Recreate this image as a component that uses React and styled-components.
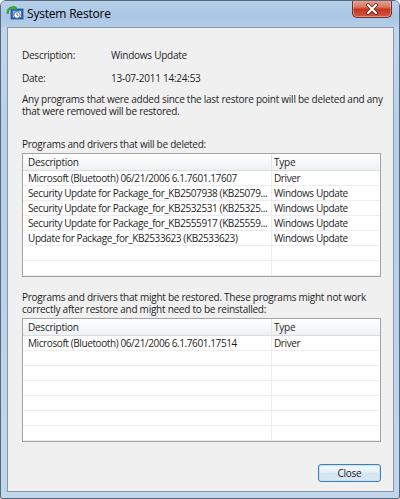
import styled, { createGlobalStyle } from 'styled-components'

const GlobalStyle = createGlobalStyle`
  html, body {
    margin: 0;
    padding: 0;
    background: #ffffff;
  }
  * {
    box-sizing: border-box;
  }
`

const Window = styled.div`
  width: 400px;
  height: 499px;
  display: flex;
  flex-direction: column;
  background: linear-gradient(to bottom, #c3d8ee 0%, #b7cfe9 30%, #c0d6ec 100%);
  border: 1px solid #55687c;
  border-radius: 6px 6px 2px 2px;
  font-family: "Open Sans", "Noto Sans", sans-serif;
  font-size: 10px;
  letter-spacing: -0.25px;
  color: #1e1e1e;
  overflow: hidden;
`

const TitleBar = styled.div`
  height: 26px;
  flex-shrink: 0;
  display: flex;
  align-items: flex-start;
  padding-left: 5px;
  background: linear-gradient(to bottom, #b9d1ea 0%, #a9c6e5 60%, #b6cfe9 100%);
`

const TitleIcon = styled.div`
  width: 18px;
  height: 16px;
  margin-top: 4px;
`

const TitleText = styled.div`
  margin-left: 3px;
  margin-top: 5px;
  font-size: 12px;
  letter-spacing: -0.2px;
  line-height: 16px;
  color: #000;
`

const CloseButton = styled.div`
  margin-left: auto;
  margin-right: 7px;
  width: 40px;
  height: 18px;
  margin-top: -1px;
  border: 1px solid #6b3027;
  border-top: none;
  border-radius: 0 0 5px 5px;
  background: linear-gradient(to bottom, #e9a593 0%, #d97a63 40%, #c4371f 55%, #d4573f 100%);
  box-shadow: inset 0 0 0 1px rgba(255, 255, 255, 0.35);
  display: flex;
  align-items: center;
  justify-content: center;
`

const Client = styled.div`
  flex: 1;
  margin: 0 5px 6px 6px;
  background: #f0f0f0;
  border: 1px solid #8a98a6;
  padding: 20px 13px 0 14px;
  display: flex;
  flex-direction: column;
`

const InfoRow = styled.div`
  display: flex;
  height: 14px;
  line-height: 14px;
  margin-bottom: ${(p) => p.$gap || 0}px;
`

const InfoLabel = styled.div`
  width: 89px;
`

const Paragraph = styled.p`
  margin: ${(p) => p.$top}px 0 0;
  line-height: 12px;
  white-space: nowrap;
`

const Table = styled.div`
  margin-top: 3px;
  width: 359px;
  height: 124px;
  flex-shrink: 0;
  background: #fff;
  border: 1px solid #a3a3a3;
  display: flex;
  flex-direction: column;
`

const HeaderRow = styled.div`
  display: grid;
  grid-template-columns: 249px 1fr;
  height: 17px;
  flex-shrink: 0;
  background: linear-gradient(to bottom, #ffffff 0%, #f7f8f9 50%, #eef0f2 100%);
  border-bottom: 1px solid #d9dde2;
`

const HeaderCell = styled.div`
  padding-left: ${(p) => (p.$first ? 5 : 2)}px;
  line-height: 16px;
  border-right: 1px solid ${(p) => (p.$first ? '#e2e5e9' : 'transparent')};
`

const Row = styled.div`
  display: grid;
  grid-template-columns: 249px 1fr;
  height: 15px;
  flex-shrink: 0;
  border-bottom: 1px solid #ededed;
`

const Cell = styled.div`
  padding-left: ${(p) => (p.$first ? 5 : 2)}px;
  line-height: 14px;
  letter-spacing: -0.4px;
  white-space: nowrap;
  overflow: hidden;
  border-right: 1px solid ${(p) => (p.$first ? '#ededed' : 'transparent')};
`

const Footer = styled.div`
  display: flex;
  justify-content: flex-end;
  width: 359px;
  margin-top: 22px;
`

const Button = styled.button`
  width: 63px;
  height: 18px;
  padding: 0;
  font-family: inherit;
  font-size: 10px;
  letter-spacing: inherit;
  color: #1e1e1e;
  border: 1px solid #3c7fb1;
  border-radius: 3px;
  background: linear-gradient(to bottom, #f4f9fd 0%, #e6f0f8 45%, #d4e4f0 50%, #dbe8f2 100%);
  box-shadow: inset 0 0 0 1px #c5e2f6;
`

const RestoreIcon = () => (
  <svg width="18" height="16" viewBox="0 0 18 16">
    <rect x="5" y="4" width="12" height="10" fill="#2f6fc7" stroke="#1b4d96" strokeWidth="0.8" />
    <rect x="7" y="6" width="8" height="6" fill="#ffffff" />
    <path d="M7 6 L15 6 L7 12 Z" fill="#7fb7ef" />
    <path d="M2 9 A5 5 0 0 1 9 3" fill="none" stroke="#3aa12c" strokeWidth="2.2" />
    <path d="M8 0.5 L11.5 3.2 L8 5.8 Z" fill="#3aa12c" />
    <circle cx="11" cy="10" r="3.2" fill="#ffffff" stroke="#505a66" strokeWidth="0.8" />
    <path d="M11 8.2 L11 10 L12.4 10.8" fill="none" stroke="#303030" strokeWidth="0.8" />
  </svg>
)

const CloseGlyph = () => (
  <svg width="14" height="12" viewBox="0 0 14 12">
    <path d="M3 2 L11 10 M11 2 L3 10" stroke="#5b2219" strokeWidth="3.6" strokeLinecap="square" />
    <path d="M3 2 L11 10 M11 2 L3 10" stroke="#ffffff" strokeWidth="2" strokeLinecap="square" />
  </svg>
)

const deleted = [
  ['Microsoft (Bluetooth) 06/21/2006 6.1.7601.17607', 'Driver'],
  ['Security Update for Package_for_KB2507938 (KB25079...', 'Windows Update'],
  ['Security Update for Package_for_KB2532531 (KB25325...', 'Windows Update'],
  ['Security Update for Package_for_KB2555917 (KB25559...', 'Windows Update'],
  ['Update for Package_for_KB2533623 (KB2533623)', 'Windows Update'],
]

const restored = [['Microsoft (Bluetooth) 06/21/2006 6.1.7601.17514', 'Driver']]

const ProgramTable = ({ rows }) => {
  const filled = [...rows]
  while (filled.length < 7) filled.push(['', ''])
  return (
    <Table>
      <HeaderRow>
        <HeaderCell $first>Description</HeaderCell>
        <HeaderCell>Type</HeaderCell>
      </HeaderRow>
      {filled.map(([desc, type], i) => (
        <Row key={i}>
          <Cell $first>{desc}</Cell>
          <Cell>{type}</Cell>
        </Row>
      ))}
    </Table>
  )
}

export default function App() {
  return (
    <>
      <GlobalStyle />
      <Window>
        <TitleBar>
          <TitleIcon>
            <RestoreIcon />
          </TitleIcon>
          <TitleText>System Restore</TitleText>
          <CloseButton>
            <CloseGlyph />
          </CloseButton>
        </TitleBar>
        <Client>
          <InfoRow $gap={9}>
            <InfoLabel>Description:</InfoLabel>
            <div>Windows Update</div>
          </InfoRow>
          <InfoRow>
            <InfoLabel>Date:</InfoLabel>
            <div>13-07-2011 14:24:53</div>
          </InfoRow>
          <Paragraph $top={8}>
            Any programs that were added since the last restore point will be deleted and any
            <br />
            that were removed will be restored.
          </Paragraph>
          <Paragraph $top={21}>Programs and drivers that will be deleted:</Paragraph>
          <ProgramTable rows={deleted} />
          <Paragraph $top={14}>
            Programs and drivers that might be restored. These programs might not work
            <br />
            correctly after restore and might need to be reinstalled:
          </Paragraph>
          <ProgramTable rows={restored} />
          <Footer>
            <Button>Close</Button>
          </Footer>
        </Client>
      </Window>
    </>
  )
}
